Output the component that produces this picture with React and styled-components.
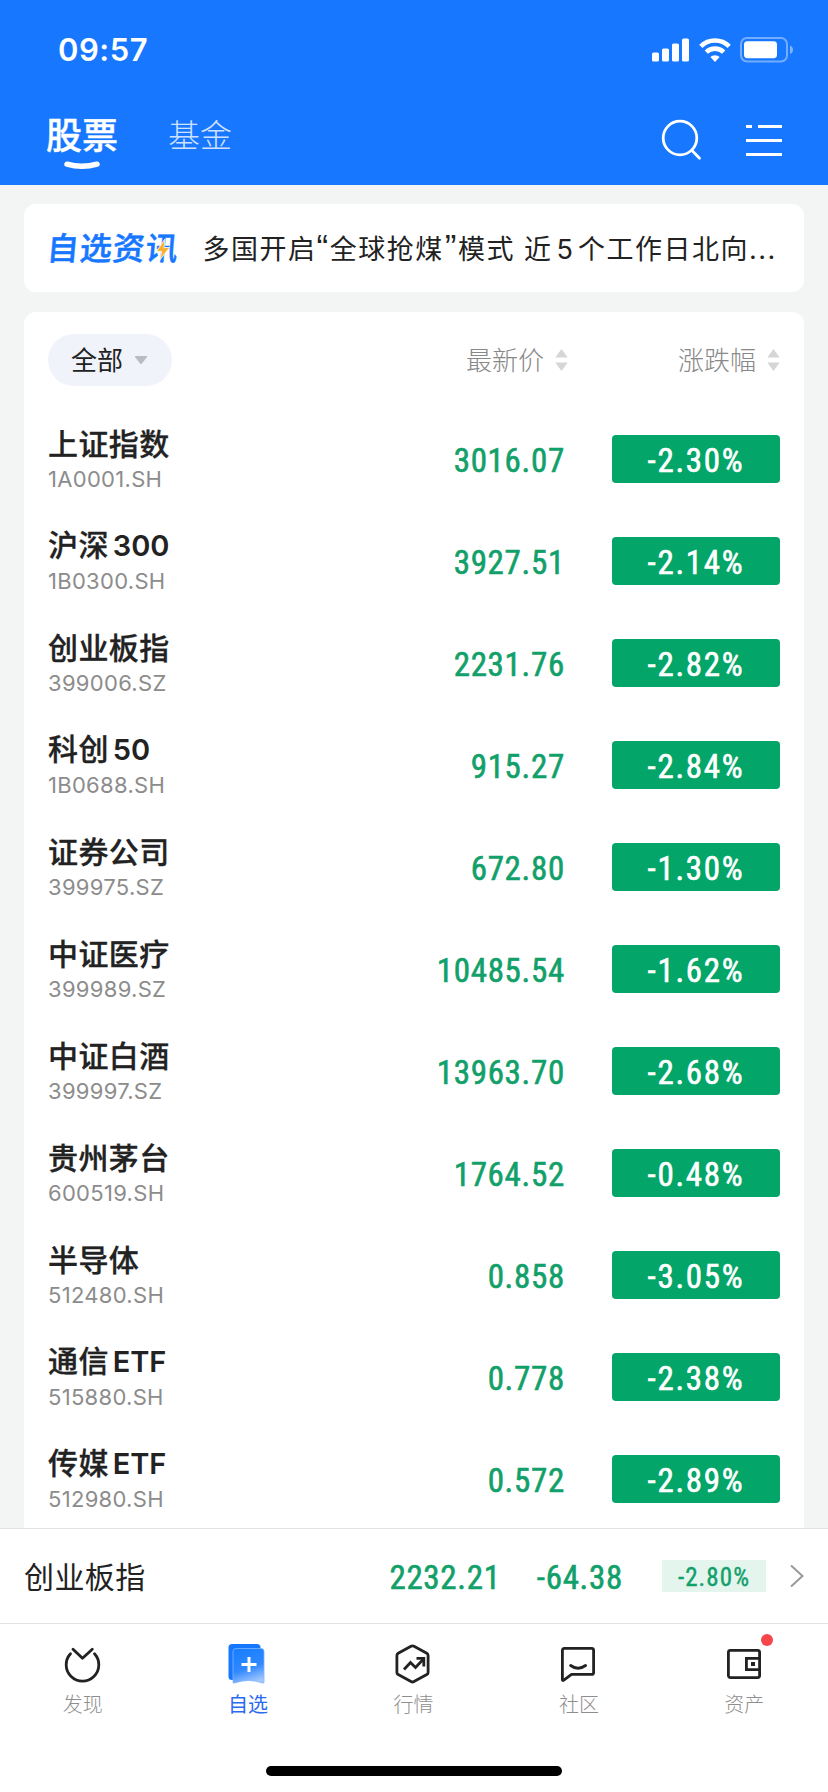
import React from 'react';
import styled, { createGlobalStyle } from 'styled-components';

const GlobalStyle = createGlobalStyle`
    * {
        box-sizing: border-box;
    }
    body {
        margin: 0;
        background: #f3f5f5;
        font-family: Inter, 'Noto Sans CJK SC', sans-serif;
        color: #222;
    }
`;

const Screen = styled.div`
    width: 828px;
    height: 1792px;
    display: flex;
    flex-direction: column;
    overflow: hidden;
`;
const Header = styled.header`
    height: 185px;
    flex-shrink: 0;
    background: #1777ff;
    color: #fff;
`;
const StatusBar = styled.div`
    height: 88px;
    padding: 11px 34px 0 58px;
    display: flex;
    align-items: center;
    justify-content: space-between;
`;
const Clock = styled.span`
    font-size: 31px;
    font-weight: 600;
    line-height: 38px;
    letter-spacing: 0.5px;
`;
const StatusIcons = styled.div`
    display: flex;
    align-items: center;
    gap: 9px;
`;
const NavBar = styled.nav`
    height: 97px;
    padding: 0 46px 0 46px;
    display: flex;
    justify-content: space-between;
`;
const NavTabs = styled.div`
    display: flex;
    gap: 50px;
`;
const NavTab = styled.div`
    display: flex;
    flex-direction: column;
    align-items: center;
    padding-top: 21px;
    font-size: ${props => (props.$active ? 36 : 32)}px;
    font-weight: ${props => (props.$active ? 500 : 300)};
    line-height: 54px;
    color: ${props => (props.$active ? '#fff' : 'rgba(255, 255, 255, 0.8)')};
    -webkit-text-stroke: ${props => (props.$active ? 0.4 : 0)}px currentColor;
`;
const Smile = styled.svg`
    margin-top: -2px;
`;
const NavActions = styled.div`
    display: flex;
    align-items: flex-start;
    gap: 44px;
    padding-top: 30px;
`;
const Main = styled.main`
    flex: 1;
    min-height: 0;
    overflow: hidden;
    padding: 19px 24px 0;
    display: flex;
    flex-direction: column;
    gap: 20px;
`;
const NewsCard = styled.section`
    height: 88px;
    flex-shrink: 0;
    padding: 2px 24px 0 23px;
    display: flex;
    align-items: center;
    gap: 24px;
    background: #fff;
    border-radius: 12px;
`;
const NewsLogo = styled.div`
    position: relative;
    font-size: 32px;
    font-weight: 500;
    line-height: 40px;
    letter-spacing: 0.9px;
    color: #1777ff;
    transform: skewX(-5deg);
    -webkit-text-stroke: 0.5px currentColor;
`;
const Bolt = styled.svg`
    position: absolute;
    left: 108px;
    top: 9px;
`;
const NewsTitle = styled.div`
    font-size: 27px;
    letter-spacing: 1.5px;
    line-height: 40px;
    white-space: nowrap;
`;
const Quote = styled.span`
    font-family: 'Liberation Sans', sans-serif;
    font-size: 35px;
    line-height: 1;
    padding-left: ${props => (props.$open ? 0 : 1)}px;
`;
const Latin = styled.span`
    margin: 0 ${props => props.$after || 0}px 0 ${props => props.$before || 0}px;
    letter-spacing: 0;
`;
const ListCard = styled.section`
    flex-shrink: 0;
    padding: 22px 24px 0;
    background: #fff;
    border-radius: 12px 12px 0 0;
`;
const ListHead = styled.div`
    height: 52px;
    margin-bottom: 22px;
    display: grid;
    grid-template-columns: 1fr 260px 212px;
    align-items: center;
`;
const FilterPill = styled.button`
    width: 124px;
    height: 52px;
    padding: 0 0 0 23px;
    display: flex;
    align-items: center;
    gap: 11px;
    border: 0;
    border-radius: 26px;
    background: #f0f3f9;
    font-family: inherit;
    font-size: 26px;
    color: #222;
`;
const HeadText = styled.span`
    margin-top: -4px;
`;
const SortLabel = styled.div`
    display: flex;
    align-items: center;
    justify-content: flex-end;
    gap: 11px;
    font-size: 26px;
    font-weight: 300;
    color: #888;
`;
const Row = styled.div`
    height: 102px;
    display: grid;
    grid-template-columns: 1fr 260px 212px;
    align-items: center;
`;
const Name = styled.div`
    margin-top: -2px;
    margin-bottom: 1px;
    font-size: 30px;
    font-weight: 500;
    line-height: 40px;
    letter-spacing: 0.4px;
    white-space: nowrap;
    -webkit-text-stroke: 0.3px currentColor;
`;
const NameLatin = styled(Latin)`
    font-size: 29px;
    font-weight: 600;
    letter-spacing: -0.1px;
    -webkit-text-stroke: 0;
`;
const Code = styled.div`
    font-size: 22px;
    line-height: 28px;
    letter-spacing: 0.3px;
    color: #8c8c8c;
`;
const Figure = styled.div`
    font-family: Roboto, sans-serif;
    font-size: 33px;
    font-weight: 400;
    font-stretch: 87%;
    line-height: 40px;
    letter-spacing: 0.7px;
    text-align: right;
    color: #12a06a;
    -webkit-text-stroke: 0.6px currentColor;
`;
const Price = styled(Figure)`
    padding: 4px 3px 0 0;
`;
const ChangeBadge = styled(Figure)`
    width: 168px;
    height: 48px;
    margin-left: auto;
    padding-top: 6px;
    border-radius: 4px;
    background: #03a568;
    color: #fff;
    text-align: center;
    letter-spacing: 1.7px;
`;
const IndexBar = styled.div`
    height: 95px;
    flex-shrink: 0;
    padding: 0 24px;
    display: flex;
    align-items: center;
    background: #fff;
    border-top: 1px solid #e2e2e2;
`;
const IndexName = styled.div`
    flex: 1;
    margin-top: -3px;
    font-size: 30px;
    letter-spacing: 0.4px;
`;
const IndexValue = styled(Figure)`
    padding-top: 4px;
    margin-right: ${props => props.$gap}px;
`;
const IndexChange = styled(Figure)`
    width: 104px;
    height: 32px;
    padding-top: 2px;
    margin-right: 24px;
    background: #e4f5ed;
    font-size: 25px;
    line-height: 32px;
    letter-spacing: 1.1px;
    text-align: center;
    -webkit-text-stroke-width: 0.4px;
`;
const TabBar = styled.footer`
    height: 169px;
    flex-shrink: 0;
    padding-top: 20px;
    display: flex;
    flex-direction: column;
    align-items: center;
    justify-content: space-between;
    background: #fff;
    border-top: 1px solid #e2e2e2;
`;
const Tabs = styled.div`
    width: 100%;
    padding-right: 1px;
    display: grid;
    grid-template-columns: repeat(5, 1fr);
`;
const Tab = styled.div`
    display: flex;
    flex-direction: column;
    align-items: center;
    gap: 5px;
    font-size: 20px;
    font-weight: ${props => (props.$active ? 400 : 300)};
    line-height: 32px;
    color: ${props => (props.$active ? '#2a6af0' : '#8e8e8e')};
`;
const TabIcon = styled.div`
    position: relative;
    height: 40px;
    color: #222;
`;
const RedDot = styled.i`
    position: absolute;
    top: -10px;
    right: -9px;
    width: 12px;
    height: 12px;
    border-radius: 50%;
    background: #f64649;
`;
const HomeIndicator = styled.div`
    width: 296px;
    height: 10px;
    margin-bottom: 16px;
    border-radius: 5px;
    background: #000;
`;

const stocks = [
    { name: '上证指数', code: '1A0001.SH', price: '3016.07', change: '-2.30%' },
    { name: '沪深', latin: '300', code: '1B0300.SH', price: '3927.51', change: '-2.14%' },
    { name: '创业板指', code: '399006.SZ', price: '2231.76', change: '-2.82%' },
    { name: '科创', latin: '50', code: '1B0688.SH', price: '915.27', change: '-2.84%' },
    { name: '证券公司', code: '399975.SZ', price: '672.80', change: '-1.30%' },
    { name: '中证医疗', code: '399989.SZ', price: '10485.54', change: '-1.62%' },
    { name: '中证白酒', code: '399997.SZ', price: '13963.70', change: '-2.68%' },
    { name: '贵州茅台', code: '600519.SH', price: '1764.52', change: '-0.48%' },
    { name: '半导体', code: '512480.SH', price: '0.858', change: '-3.05%' },
    { name: '通信', latin: 'ETF', code: '515880.SH', price: '0.778', change: '-2.38%' },
    { name: '传媒', latin: 'ETF', code: '512980.SH', price: '0.572', change: '-2.89%' },
];

const SignalIcon = () => (
    <svg width="38" height="24" viewBox="0 0 38 24" fill="#fff">
        <rect x="0" y="14.5" width="7" height="9" rx="1.6" />
        <rect x="10" y="10.5" width="7" height="13" rx="1.6" />
        <rect x="20" y="5.5" width="7" height="18" rx="1.6" />
        <rect x="30" y="0.5" width="7" height="23" rx="1.6" />
    </svg>
);

const WifiIcon = () => (
    <svg width="32" height="24" viewBox="0 0 32 24" fill="none" stroke="#fff" strokeWidth="4.6">
        <path d="M1.8 8.3a20.3 20.3 0 0 1 28.4 0" />
        <path d="M7.3 14.1a12.5 12.5 0 0 1 17.4 0" />
        <path d="M16 24l-4.6-4.9a6.6 6.6 0 0 1 9.2 0z" fill="#fff" stroke="none" />
    </svg>
);

const BatteryIcon = () => (
    <svg width="54" height="26" viewBox="0 0 54 26">
        <rect x="1" y="1" width="46" height="23.5" rx="6" fill="none" stroke="#fff" strokeOpacity="0.4" strokeWidth="2" />
        <rect x="4" y="4.2" width="33" height="17" rx="3.4" fill="#fff" />
        <path d="M50 8.6c4 1.6 4 6.8 0 8.4z" fill="#fff" fillOpacity="0.45" />
    </svg>
);

const SearchIcon = () => (
    <svg width="42" height="44" viewBox="0 0 42 44" fill="none" stroke="#fff" strokeWidth="2.8" strokeLinecap="round">
        <circle cx="20" cy="20" r="16.8" />
        <path d="M32 32.5l7.5 7.8" />
    </svg>
);

const MenuIcon = () => (
    <svg width="36" height="40" viewBox="0 0 36 40" stroke="#fff" strokeWidth="3">
        <path d="M0 8.5h6M12 8.5h24M0 22.5h36M0 36.5h36" />
    </svg>
);

const SortIcon = () => (
    <svg width="13" height="22" viewBox="0 0 13 22" fill="#d6d6d6">
        <path d="M6.5 0l6.2 8.5H.3z" />
        <path d="M6.5 22l6.2-8.5H.3z" />
    </svg>
);

const DiscoverIcon = () => (
    <svg width="40" height="40" viewBox="0 0 40 40" fill="none" stroke="currentColor" strokeWidth="2.8" strokeLinecap="round">
        <path d="M7.5 9.8a16.3 16.3 0 1 0 24 0" />
        <path d="M10 5.2l9.5 9.1 9.8-9.1" strokeLinejoin="round" />
    </svg>
);

const WatchlistIcon = () => (
    <svg width="40" height="40" viewBox="0 0 40 40">
        <defs>
            <linearGradient id="page" x1="0.35" y1="0" x2="0.65" y2="1">
                <stop offset="0" stopColor="#1a80ff" />
                <stop offset="0.55" stopColor="#2f88ff" />
                <stop offset="1" stopColor="#a6c8ff" />
            </linearGradient>
        </defs>
        <rect x="0.5" y="0" width="32" height="36" rx="3.5" fill="#1777ff" />
        <path
            d="M8 4.5h25a3 3 0 0 1 3 3V38q0 1.5-1.5 1Q20.5 34 6.5 39 5 39.5 5 38V7.5a3 3 0 0 1 3-3z"
            fill="url(#page)"
            stroke="#7db2ff"
            strokeWidth="0.8"
        />
        <path d="M13.5 20.5h15M21 13v15" stroke="#fff" strokeWidth="3" />
    </svg>
);

const MarketIcon = () => (
    <svg width="40" height="40" viewBox="0 0 40 40" fill="none" stroke="currentColor" strokeWidth="2.8" strokeLinejoin="round">
        <path d="M18 2.2q1.5-.8 3 0l12.8 7q1.3.8 1.3 2.2v17q0 1.4-1.3 2.2l-12.8 7q-1.5.8-3 0l-12.8-7Q3.9 29.8 3.9 28.4v-17q0-1.4 1.3-2.2z" />
        <path d="M11 25.5l6.5-7 5 5 8-8.5" strokeLinejoin="miter" />
        <path d="M23.5 14.4h7.3v8" strokeLinejoin="miter" />
    </svg>
);

const CommunityIcon = () => (
    <svg width="40" height="40" viewBox="0 0 40 40" fill="none" stroke="currentColor" strokeWidth="2.8" strokeLinejoin="round">
        <path d="M5.4 4.4h27.2q2 0 2 2v22q0 2-2 2H12.5L4.5 36.3q-1.1.6-1.1-.8V6.4q0-2 2-2z" />
        <path d="M11.6 21.5q7.4 5.4 15 0" strokeLinecap="round" />
    </svg>
);

const AssetsIcon = () => (
    <svg width="40" height="40" viewBox="0 0 40 40" fill="none" stroke="currentColor" strokeWidth="2.8">
        <rect x="4.4" y="6.4" width="31.2" height="27.2" rx="2" />
        <path d="M35.5 14.4H22.4v11.2h13.1" />
        <rect x="27" y="18" width="4" height="4" fill="currentColor" stroke="none" />
    </svg>
);

const tabs = [
    { label: '发现', icon: DiscoverIcon },
    { label: '自选', icon: WatchlistIcon, active: true },
    { label: '行情', icon: MarketIcon },
    { label: '社区', icon: CommunityIcon },
    { label: '资产', icon: AssetsIcon, dot: true },
];

const StockRow = ({ stock }) => (
    <Row>
        <div>
            <Name>
                {stock.name}
                {stock.latin && <NameLatin $before={4}>{stock.latin}</NameLatin>}
            </Name>
            <Code>{stock.code}</Code>
        </div>
        <Price>{stock.price}</Price>
        <ChangeBadge>{stock.change}</ChangeBadge>
    </Row>
);

const App = () => {
    return (
        <Screen lang="zh-CN">
            <GlobalStyle />
            <Header>
                <StatusBar>
                    <Clock>09:57</Clock>
                    <StatusIcons>
                        <SignalIcon />
                        <WifiIcon />
                        <BatteryIcon />
                    </StatusIcons>
                </StatusBar>
                <NavBar>
                    <NavTabs>
                        <NavTab $active>
                            股票
                            <Smile width="38" height="10" viewBox="0 0 38 10" fill="none" stroke="#fff" strokeWidth="5.5" strokeLinecap="round">
                                <path d="M4 3.2q15 4.2 30 0" />
                            </Smile>
                        </NavTab>
                        <NavTab>基金</NavTab>
                    </NavTabs>
                    <NavActions>
                        <SearchIcon />
                        <MenuIcon />
                    </NavActions>
                </NavBar>
            </Header>
            <Main>
                <NewsCard>
                    <NewsLogo>
                        自选资讯
                        <Bolt width="16" height="24" viewBox="0 0 16 24">
                            <path d="M9 1L1.5 13.5H7L5.5 22.5 14.5 9.5H9z" fill="#f8b133" stroke="#fff" strokeWidth="0.8" />
                        </Bolt>
                    </NewsLogo>
                    <NewsTitle>
                        多国开启<Quote $open>“</Quote>全球抢煤<Quote>”</Quote>模式 近
                        <Latin $before={4} $after={5}>5</Latin>个工作日北向...
                    </NewsTitle>
                </NewsCard>
                <ListCard>
                    <ListHead>
                        <FilterPill>
                            <HeadText>全部</HeadText>
                            <svg width="14" height="10" viewBox="0 0 14 10" fill="#b9bbbf">
                                <path d="M1.5 1h11q1.2 0 .5 1L8 8.5q-1 1-2 0L1 2Q.3 1 1.5 1z" />
                            </svg>
                        </FilterPill>
                        <SortLabel><HeadText>最新价</HeadText><SortIcon /></SortLabel>
                        <SortLabel><HeadText>涨跌幅</HeadText><SortIcon /></SortLabel>
                    </ListHead>
                    {stocks.map(stock => <StockRow key={stock.code} stock={stock} />)}
                </ListCard>
            </Main>
            <IndexBar>
                <IndexName>创业板指</IndexName>
                <IndexValue $gap={36}>2232.21</IndexValue>
                <IndexValue $gap={39}>-64.38</IndexValue>
                <IndexChange>-2.80%</IndexChange>
                <svg width="14" height="24" viewBox="0 0 14 24" fill="none" stroke="#999" strokeWidth="2">
                    <path d="M1 1.5L12.5 12 1 22.5" />
                </svg>
            </IndexBar>
            <TabBar>
                <Tabs>
                    {tabs.map(({ label, icon: Icon, active, dot }) => (
                        <Tab key={label} $active={active}>
                            <TabIcon>
                                <Icon />
                                {dot && <RedDot />}
                            </TabIcon>
                            {label}
                        </Tab>
                    ))}
                </Tabs>
                <HomeIndicator />
            </TabBar>
        </Screen>
    );
};

export default App;
